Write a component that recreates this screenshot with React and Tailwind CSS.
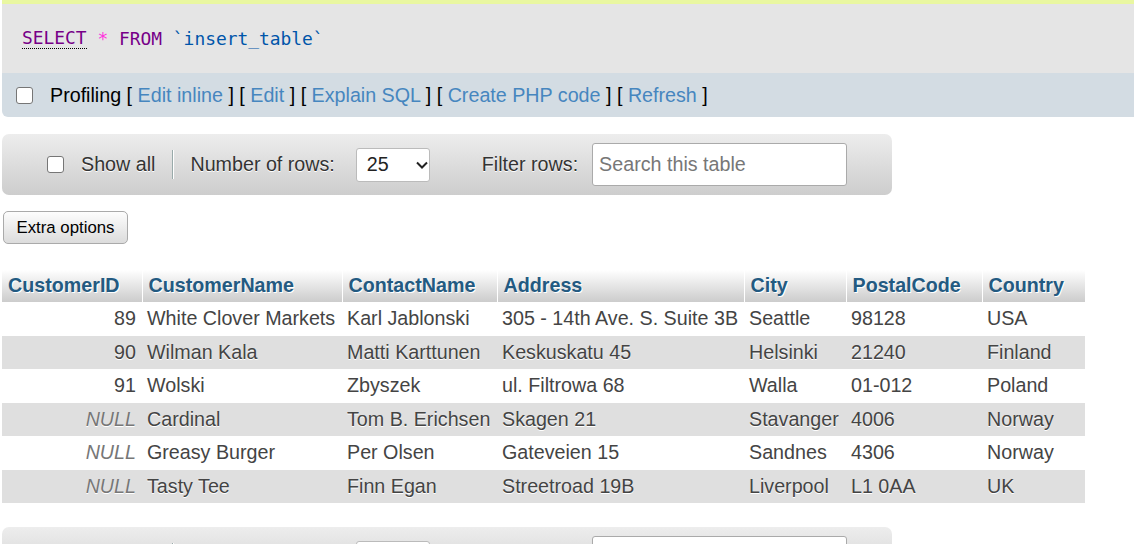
import React from "react";

const rows = [
  ["89", "White Clover Markets", "Karl Jablonski", "305 - 14th Ave. S. Suite 3B", "Seattle", "98128", "USA"],
  ["90", "Wilman Kala", "Matti Karttunen", "Keskuskatu 45", "Helsinki", "21240", "Finland"],
  ["91", "Wolski", "Zbyszek", "ul. Filtrowa 68", "Walla", "01-012", "Poland"],
  [null, "Cardinal", "Tom B. Erichsen", "Skagen 21", "Stavanger", "4006", "Norway"],
  [null, "Greasy Burger", "Per Olsen", "Gateveien 15", "Sandnes", "4306", "Norway"],
  [null, "Tasty Tee", "Finn Egan", "Streetroad 19B", "Liverpool", "L1 0AA", "UK"],
];

const headers = ["CustomerID", "CustomerName", "ContactName", "Address", "City", "PostalCode", "Country"];
const widths = ["w-[140px]", "w-[200px]", "w-[155px]", "w-[247px]", "w-[102px]", "w-[136px]", "w-[103px]"];

function Box({ className = "" }) {
  return <span className={"inline-block w-[17px] h-[17px] bg-white border border-[#767676] rounded-[3px] " + className} />;
}

function Link({ children }) {
  return <span className="text-[#4686bf]">{children}</span>;
}

function NavBar() {
  return (
    <div className="w-[890px] h-[61px] rounded-[7px] bg-gradient-to-b from-[#ededed] to-[#cdcdcd] flex items-center pl-[45px] text-[#333] [text-shadow:0_1px_0_#fff]">
      <Box />
      <span className="ml-[17px]">Show all</span>
      <span className="ml-[17px] w-[2px] h-[29px] border-l border-[#9aa] bg-white" />
      <span className="ml-[16px]">Number of rows:</span>
      <div className="ml-[21px] w-[74px] h-[34px] bg-white border border-[#bbb] rounded-[3px] flex items-center pl-[10px] text-[#222] [text-shadow:none]">
        <span>25</span>
        <svg className="ml-[26px]" width="14" height="10" viewBox="0 0 14 10">
          <polyline points="2,2.5 7,7.5 12,2.5" fill="none" stroke="#222" strokeWidth="2" />
        </svg>
      </div>
      <span className="ml-[52px]">Filter rows:</span>
      <div className="ml-[14px] w-[255px] h-[43px] bg-white border border-[#aaa] rounded-[3px] flex items-center pl-[6px] text-[#777] [text-shadow:none]">
        Search this table
      </div>
    </div>
  );
}

export default function App() {
  return (
    <div className="w-[1134px] min-h-[544px] overflow-hidden bg-white pl-[2px] font-['Liberation_Sans',Arial,sans-serif] text-[19.7px] text-[#444] leading-[23px]">
      <div className="h-[4px] bg-[#e9f7a1]" />
      <div className="h-[69px] bg-[#e5e5e5] flex items-center pl-[20px] font-['DejaVu_Sans_Mono',monospace] text-[17.9px]">
        <span className="text-[#770088] border-b border-dotted border-black leading-[20px]">SELECT</span>
        <span className="whitespace-pre text-[#ff33dd]"> * </span>
        <span className="text-[#770088]">FROM</span>
        <span className="whitespace-pre text-[#0055aa]"> `insert_table`</span>
      </div>
      <div className="h-[44px] bg-[#d3dce3] rounded-bl-[6px] flex items-center pl-[14px] text-black whitespace-pre">
        <Box />
        <span className="ml-[17px]">Profiling [ <Link>Edit inline</Link> ] [ <Link>Edit</Link> ] [ <Link>Explain SQL</Link> ] [ <Link>Create PHP code</Link> ] [ <Link>Refresh</Link> ]</span>
      </div>

      <div className="mt-[17px]">
        <NavBar />
      </div>

      <div className="mt-[16px] ml-[1px] w-[125px] h-[33px] rounded-[5px] border border-[#aaa] bg-gradient-to-b from-[#fdfdfd] to-[#dcdcdc] flex items-center justify-center text-[16.8px] text-black">
        Extra options
      </div>

      <table className="mt-[26px] table-fixed border-collapse w-[1083px]">
        <colgroup>
          {widths.map((w, i) => (
            <col key={i} className={w} />
          ))}
        </colgroup>
        <thead>
          <tr className="h-[32px] bg-gradient-to-b from-white to-[#cccccc]">
            {headers.map((h, i) => (
              <th
                key={h}
                className={"text-left font-bold text-[#235a81] px-[6px] pb-[2px] [text-shadow:1px_1px_0_#fff] " + (i < 6 ? "border-r border-white" : "")}
              >
                {h}
              </th>
            ))}
          </tr>
        </thead>
        <tbody>
          {rows.map((r, ri) => (
            <tr key={ri} className={(ri % 2 === 0 ? "bg-white" : "bg-[#dfdfdf]") + " h-[33.5px]"}>
              <td className="text-right pr-[6px] [text-shadow:0_1px_0_#fff]">
                {r[0] === null ? <span className="italic text-[#777]">NULL</span> : r[0]}
              </td>
              {r.slice(1).map((c, ci) => (
                <td key={ci} className="px-[5px] whitespace-nowrap [text-shadow:0_1px_0_#fff]">
                  {c}
                </td>
              ))}
            </tr>
          ))}
        </tbody>
      </table>

      <div className="mt-[24px]">
        <NavBar />
      </div>
    </div>
  );
}
